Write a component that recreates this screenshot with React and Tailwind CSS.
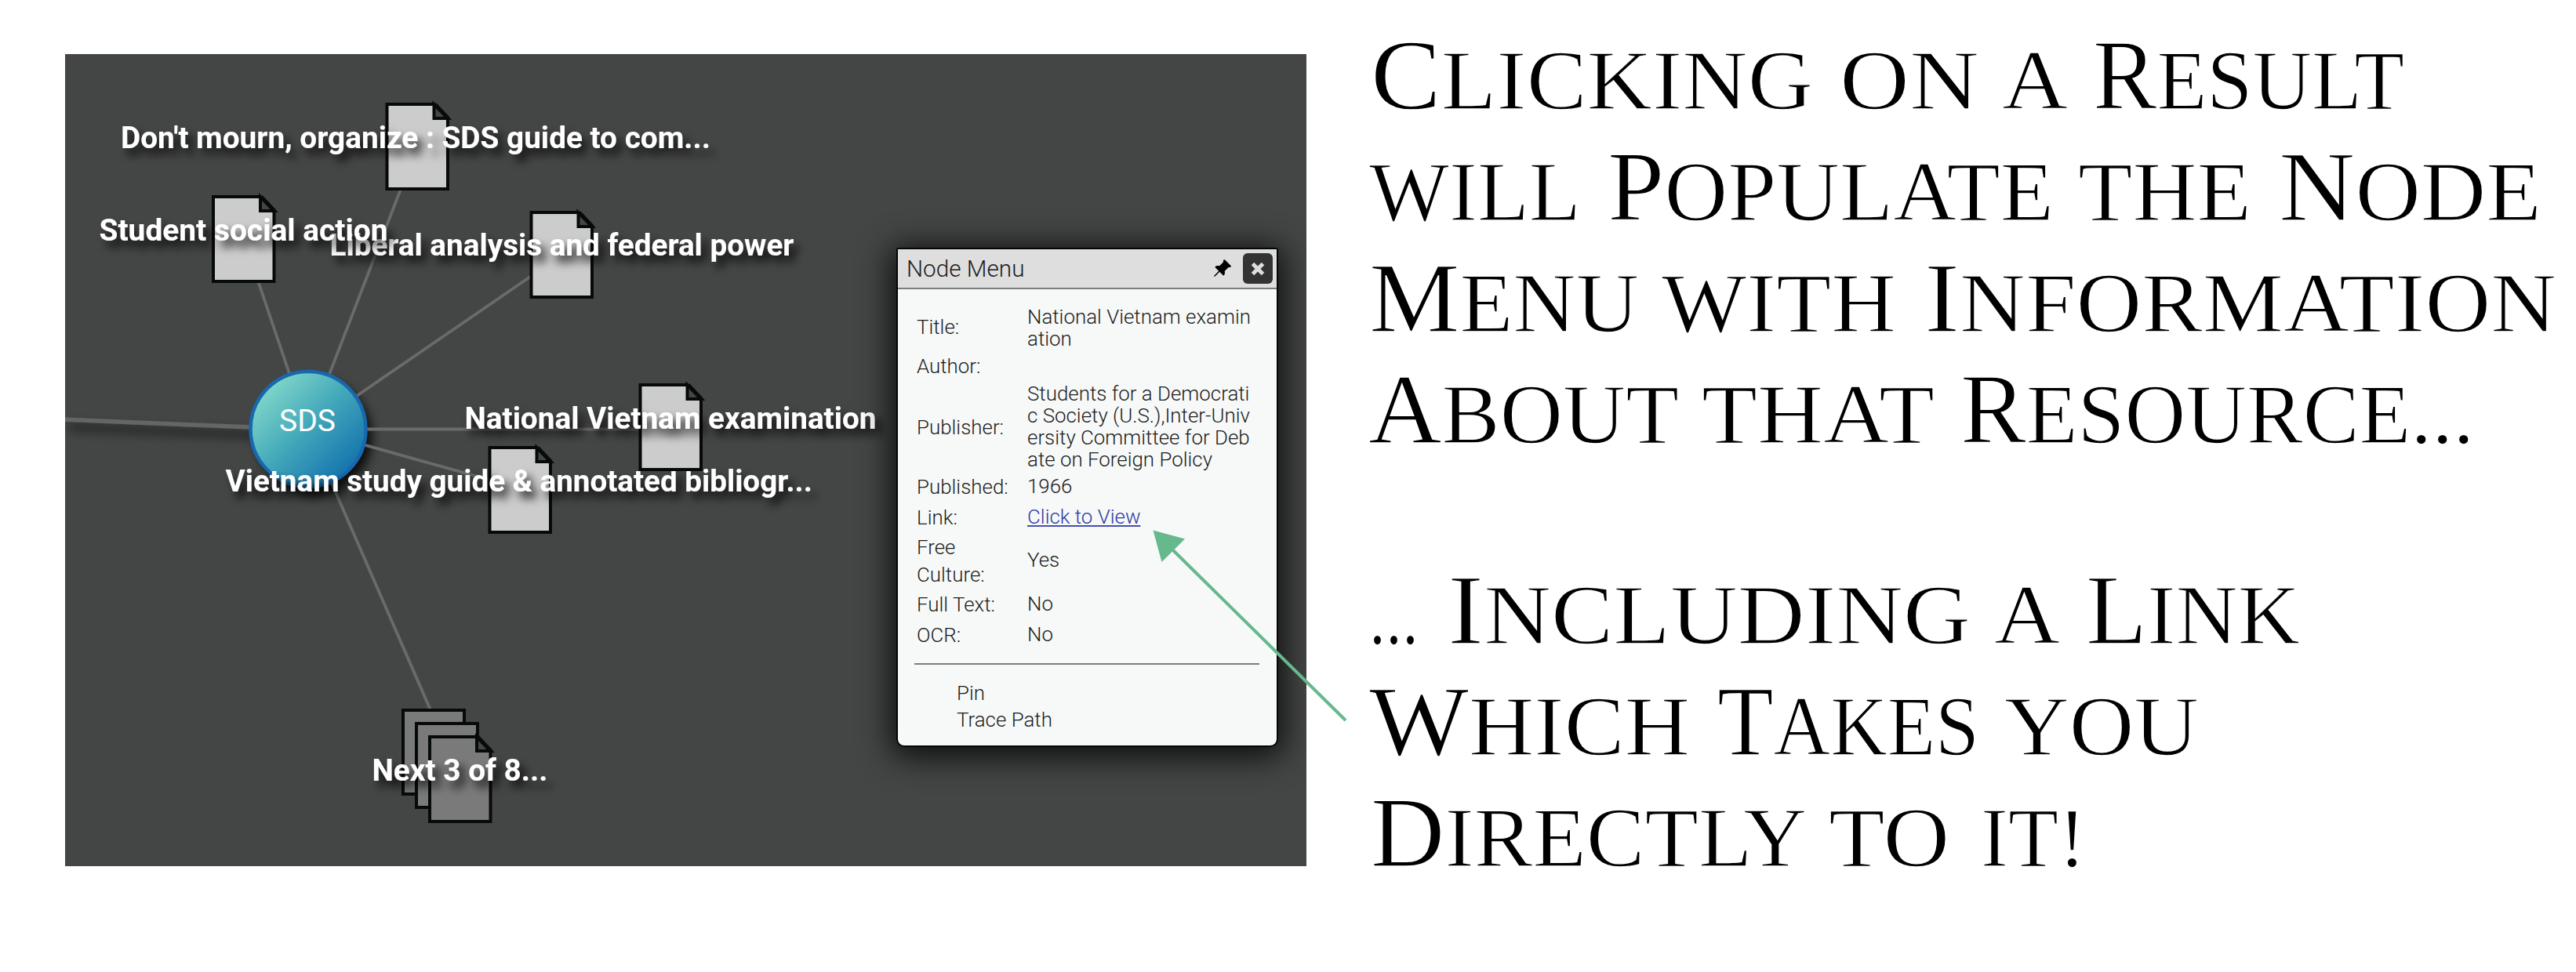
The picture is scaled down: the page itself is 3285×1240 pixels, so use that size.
import { useLayoutEffect, useRef, useState } from "react";
import { BsPinAngleFill } from "react-icons/bs";

/* A page icon with a folded corner; x and y are its outer top-left corner. */
function Sheet({ x, y, fill = "#cccccc" }) {
  return (
    <g transform={`translate(${x} ${y})`} stroke="#060a09" strokeWidth="4" strokeLinejoin="miter">
      <path d="M2 2H63L79.5 20V110H2Z" fill={fill} stroke="none" />
      <path d="M62 2L80 20H62Z" fill="#444645" />
      <path d="M62 2H2V110H79.5V20" fill="none" />
      <path d="M63 2L80 20" fill="none" strokeWidth="5" />
    </g>
  );
}

function Label({ x, y, w, children }) {
  return (
    <text x={x} y={y} textLength={w} lengthAdjust="spacingAndGlyphs" filter="url(#labelShadow)"
      className="fill-white font-['Roboto',sans-serif] text-[39.5px] font-bold">
      {children}
    </text>
  );
}

function Graph() {
  const ends = [[532, 187], [311, 305], [717, 325], [855, 547.5], [663, 623], [580, 977]];
  return (
    <svg viewBox="83 69 1583 1036" className="block h-full w-full">
      <defs>
        <filter id="labelShadow" x="-10%" y="-60%" width="120%" height="280%">
          <feDropShadow dx="7" dy="9" stdDeviation="6" floodColor="#000" floodOpacity="0.85" />
        </filter>
        <filter id="nodeShadow" filterUnits="userSpaceOnUse" x="60" y="440" width="480" height="240">
          <feDropShadow dx="8" dy="10" stdDeviation="7" floodColor="#000" floodOpacity="0.85" />
        </filter>
        <linearGradient id="node" x1="0.1" y1="0.15" x2="0.85" y2="0.9">
          <stop offset="0" stopColor="#82d8c9" />
          <stop offset="0.45" stopColor="#46abbb" />
          <stop offset="1" stopColor="#1272ad" />
        </linearGradient>
      </defs>
      <path d="M80 535L393 548" stroke="#646665" strokeWidth="5.5" filter="url(#nodeShadow)" />
      <circle cx="393" cy="547.5" r="73.5" fill="#1768ae" filter="url(#nodeShadow)" />
      {ends.map(([x, y]) => (
        <path key={x} d={`M393 547.5L${x} ${y}`} stroke="#6a6a6a" strokeWidth="3.8" />
      ))}
      <circle cx="393" cy="547.5" r="73.5" fill="url(#node)" stroke="#1768ae" strokeWidth="4.5" />
      <text x="356" y="550" textLength="72" lengthAdjust="spacingAndGlyphs"
        className="fill-white font-['Roboto',sans-serif] text-[39.5px]">SDS</text>
      <Sheet x={491.5} y={131} />
      <Label x={154} y={188.7} w={752}>Don't mourn, organize : SDS guide to com...</Label>
      <Sheet x={675.5} y={269} />
      <Label x={420.5} y={325.7} w={592}>Liberal analysis and federal power</Label>
      <Sheet x={270} y={249} />
      <Label x={126.5} y={306.7} w={368}>Student social action</Label>
      <Sheet x={622.5} y={569} />
      <Label x={287.5} y={626.7} w={748.5}>Vietnam study guide &amp; annotated bibliogr...</Label>
      <Sheet x={814.5} y={489} />
      <Label x={592.5} y={547} w={525}>National Vietnam examination</Label>
      <g fill="#7a7a7a" stroke="#060a09" strokeWidth="4">
        <path d="M514 906H592V1013H514Z" />
        <path d="M531 923H609V1030H531Z" />
      </g>
      <Sheet x={546} y={938} fill="#7a7a7a" />
      <Label x={474.5} y={996} w={224}>Next 3 of 8...</Label>
    </svg>
  );
}

function Row({ h, label, nudge = "", children }) {
  return (
    <div className={`grid grid-cols-[141px_1fr] items-center ${h}`}>
      <div className="w-[112px] leading-[35px]">{label}</div>
      <div className={`leading-[28px] whitespace-nowrap ${nudge}`}>{children}</div>
    </div>
  );
}

function NodeMenu() {
  return (
    <section className="absolute top-[247px] left-[1060px] flex h-[637px] w-[487px] flex-col overflow-hidden rounded-t-[3px] rounded-b-[10px] border-2 border-[#030605] bg-[#f7f9f8] font-['Roboto',sans-serif] text-[25.9px] font-light text-[#1c1c1c] shadow-[0_6px_40px_6px_rgba(0,0,0,0.85)]">
      <header className="flex h-[51px] shrink-0 items-center border-b-2 border-[#7b7e7d] bg-[#dedede] pr-[5px] pl-[11px]">
        <h2 className="text-[29.7px] leading-[49px]">Node Menu</h2>
        <BsPinAngleFill className="ml-auto h-[25px] w-[25px] text-black" />
        <button className="ml-[14px] flex h-[39px] w-[38px] items-center justify-center rounded-[6px] bg-[#333]">
          <svg viewBox="0 0 18 18" className="h-[18px] w-[18px]">
            <path d="M2.5 2.5L15.5 15.5M15.5 2.5L2.5 15.5" stroke="#dedede" strokeWidth="5" />
          </svg>
        </button>
      </header>
      <div className="pt-[19px] pl-[24px]">
        <Row h="h-[59px]" label="Title:">National Vietnam examin<br />ation</Row>
        <Row h="h-[41px]" label="Author:" />
        <Row h="h-[114px]" label="Publisher:" nudge="-mt-[2px]">
          Students for a Democrati<br />c Society (U.S.),Inter-Univ<br />ersity Committee for Deb<br />ate on Foreign Policy
        </Row>
        <Row h="h-[39px]" label="Published:" nudge="-mt-[4px]">1966</Row>
        <Row h="h-[39px]" label="Link:" nudge="-mt-[4px]">
          <a href="#view" className="text-[#2c39a6] underline decoration-[#4450b0] decoration-2 underline-offset-[2px]">Click to View</a>
        </Row>
        <Row h="h-[72px]" label="Free Culture:" nudge="-mt-[4px]">Yes</Row>
        <Row h="h-[39px]" label="Full Text:" nudge="-mt-[4px]">No</Row>
        <Row h="h-[39px]" label="OCR:" nudge="-mt-[4px]">No</Row>
      </div>
      <hr className="mt-[16px] mr-[22px] ml-[21px] border-t-2 border-[#7b7e7d]" />
      <ul className="mt-[19px] pl-[75px] leading-[34px]">
        <li>Pin</li>
        <li>Trace Path</li>
      </ul>
    </section>
  );
}

/* A headline word in capitals, stretched to its column; `cap` enlarges the initial. */
function Word({ gap, w, cap, children }) {
  const ref = useRef(null);
  const [scale, setScale] = useState(1);
  useLayoutEffect(() => {
    setScale((w + 4) / ref.current.offsetWidth);
  }, [w]);
  return (
    <span className="block shrink-0" style={{ width: w, marginLeft: gap }}>
      <span
        ref={ref}
        className={cap ? "-ml-[2px] inline-block origin-left first-letter:text-[126px]" : "-ml-[2px] inline-block origin-left"}
        style={{ transform: `scaleX(${scale})` }}
      >
        {children}
      </span>
    </span>
  );
}

const first = [
  [["Clicking", 5, 560, 1], ["on", 38, 174], ["a", 33, 80], ["Result", 36, 393, 1]],
  [["will", 3, 266], ["Populate", 38, 565, 1], ["the", 35, 217], ["Node", 39, 331, 1]],
  [["Menu", 3, 340, 1], ["with", 33, 295], ["Information", 40, 802, 1]],
  [["About", 2, 392, 1], ["that", 33, 293], ["Resource...", 37, 651, 1]],
];
const second = [
  [["...", 3, 59], ["Including", 41, 663, 1], ["a", 34, 80], ["Link", 37, 269, 1]],
  [["Which", 3, 405, 1], ["Takes", 39, 330, 1], ["you", 36, 244]],
  [["Directly", 5, 552, 1], ["to", 32, 150], ["it!", 44, 130]],
];

function Paragraph({ lines }) {
  return (
    <div className="flex flex-col">
      {lines.map((line, i) => (
        <div key={i} className="flex h-[142px] items-baseline">
          {line.map(([text, gap, w, cap]) => (
            <Word key={text} gap={gap} w={w} cap={cap}>{text}</Word>
          ))}
        </div>
      ))}
    </div>
  );
}

export default function App() {
  return (
    <main className="relative flex h-[1240px] w-[3285px] overflow-hidden bg-white">
      <div className="relative mt-[69px] ml-[83px] h-[1036px] w-[1583px] shrink-0 overflow-hidden bg-[#444645]">
        <Graph />
        <NodeMenu />
      </div>
      <div className="ml-[79px] flex flex-col gap-[114px] pt-[26px] font-['Liberation_Serif',serif] text-[108px] leading-[142px] whitespace-nowrap text-black uppercase [-webkit-text-stroke:1.4px_white]">
        <Paragraph lines={first} />
        <Paragraph lines={second} />
      </div>
      <svg viewBox="0 0 260 260" className="pointer-events-none absolute top-[670px] left-[1465px] h-[260px] w-[260px]">
        <path d="M30 31L251 249" stroke="#66b88d" strokeWidth="4" />
        <path d="M5.5 6.5L46 17.5L16.5 47Z" fill="#66b88d" />
      </svg>
    </main>
  );
}
